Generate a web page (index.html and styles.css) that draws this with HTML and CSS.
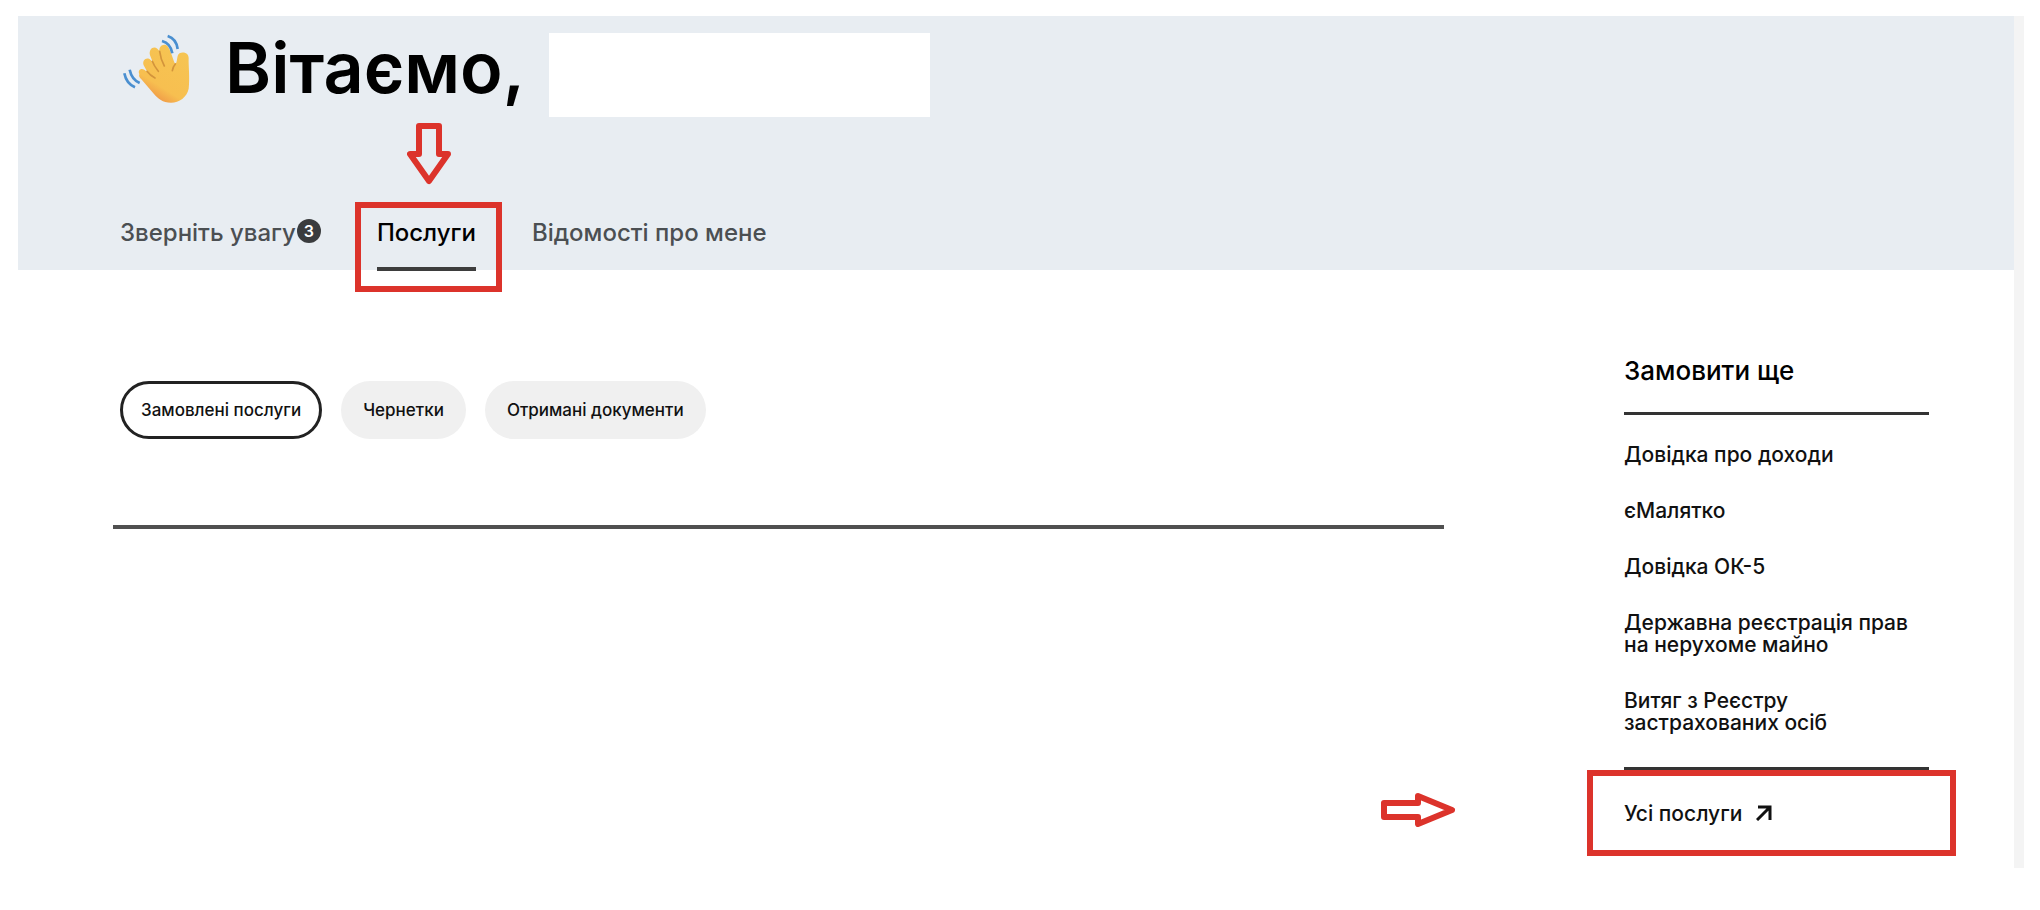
FILE: index.html
```html
<!DOCTYPE html>
<html lang="uk">
<head>
  <meta charset="UTF-8">
  <title>Послуги</title>
  <meta name="viewport" content="width=device-width, initial-scale=1.0">
  <link rel="stylesheet" href="styles.css">
</head>
<body>
  <div class="page">
    <header class="header">
      <div class="greeting">
        <svg class="wave" viewBox="0 0 204 210" aria-hidden="true">
          <defs>
            <linearGradient id="skin" x1="0.8" y1="0.1" x2="0.3" y2="1">
              <stop offset="0" stop-color="#f6c452"/>
              <stop offset="0.7" stop-color="#f7bf50"/>
              <stop offset="1" stop-color="#ee8f45"/>
            </linearGradient>
          </defs>
          <path fill="url(#skin)" d="M52 120 C46 108 58 100 68 108 L76 114 L65 94 C59 79 74 67 86 78 L92 84 L84 64 C79 46 94 34 106 44 L113 52 C108 36 128 25 138 38 C148 53 152 76 160 90 C165 86 164 78 167 66 C170 51 200 52 200 72 C199 96 204 130 200 164 C195 189 172 206 147 206 C122 206 108 194 96 180 L58 136 C52 130 50 126 52 120Z"/>
          <path fill="none" stroke="#d3943b" stroke-width="5" stroke-linecap="round" d="M75 112 Q84 124 99 132 M91 82 Q96 96 109 112 M113 52 Q116 76 127 96 M160 90 Q153 98 151 110"/>
          <g fill="none" stroke="#4a8fd0" stroke-width="8">
            <path d="M120 21 Q146 28 151 58"/>
            <path d="M137 6 Q163 14 167 45"/>
            <path d="M23 107 Q29 136 53 147"/>
            <path d="M7 118 Q13 149 39 160"/>
          </g>
        </svg>
        <h1 class="title">Вітаємо,</h1>
        <div class="user-name"></div>
      </div>

      <nav class="tabs">
        <a class="tab" href="#attention">Зверніть увагу<span class="badge">3</span></a>
        <a class="tab active" href="#services">Послуги
          <span class="frame tab-frame"></span>
          <svg class="pointer-down" viewBox="0 0 44 64" aria-hidden="true"><path d="M12 4H32V32H41L22 59L3 32H12Z"/></svg>
        </a>
        <a class="tab" href="#about">Відомості про мене</a>
      </nav>
    </header>

    <div class="content">
      <main class="services">
        <div class="filters">
          <button class="pill selected" type="button">Замовлені послуги</button>
          <button class="pill" type="button">Чернетки</button>
          <button class="pill" type="button">Отримані документи</button>
        </div>
        <hr class="divider">
      </main>

      <aside class="sidebar">
        <h2>Замовити ще</h2>
        <ul class="links">
          <li><a href="#income">Довідка про доходи</a></li>
          <li><a href="#malyatko">єМалятко</a></li>
          <li><a href="#ok5">Довідка ОК-5</a></li>
          <li><a href="#property">Державна реєстрація прав на нерухоме майно</a></li>
          <li><a href="#insured">Витяг з Реєстру застрахованих осіб</a></li>
        </ul>
        <div class="all-services">
          <a href="#all">Усі послуги
            <svg class="arrow-icon" viewBox="0 0 16 16" aria-hidden="true"><path d="M2 2H14V15M14 2L1 15"/></svg>
          </a>
          <span class="frame all-frame"></span>
          <svg class="pointer-right" viewBox="0 0 76 36" aria-hidden="true"><path d="M4 11H38V4L72 18L38 32V25H4Z"/></svg>
        </div>
      </aside>
    </div>
  </div>
</body>
</html>
```
FILE: styles.css
```css
* {
  box-sizing: border-box;
}
body {
  margin: 0;
  background: #fff;
  color: #111;
  font-family: Inter, 'Liberation Sans', sans-serif;
  font-weight: 500;
}
a {
  color: inherit;
  text-decoration: none;
}
.page {
  margin: 16px 16px 42px 18px;
  border-right: 10px solid #f4f4f4;
  min-height: calc(100vh - 58px);
}

/* header */
.header {
  background: #e8edf2;
  padding: 17px 102px 0 102px;
}
.greeting {
  display: flex;
  align-items: center;
  height: 84px;
}
.wave {
  width: 68px;
  height: 70px;
  margin: 0 35px 12px 2px;
}
.title {
  margin: 0 24px 14px 0;
  font-size: 70px;
  line-height: 70px;
  font-weight: 600;
  color: #000;
}
.user-name {
  width: 381px;
  height: 84px;
  background: #fff;
}
.tabs {
  display: flex;
  gap: 56px;
  padding-top: 100px;
}
.tab {
  position: relative;
  font-size: 24px;
  line-height: 32px;
  padding-bottom: 21px;
  color: #4b4f52;
}
.tab.active {
  color: #000;
}
.tab.active::after {
  content: "";
  position: absolute;
  left: 0;
  right: 0;
  bottom: -1px;
  height: 4px;
  background: #3d3d3d;
}
.badge {
  display: inline-block;
  width: 24px;
  height: 24px;
  margin-left: 1px;
  border-radius: 50%;
  background: #3a3c3e;
  color: #fff;
  font-size: 16px;
  line-height: 24px;
  font-weight: 600;
  text-align: center;
  vertical-align: 4px;
}

/* red marks */
.frame {
  position: absolute;
  border: 6px solid #dc332b;
}
.tab-frame {
  inset: -15px -26px -22px -22px;
}
.pointer-down,
.pointer-right {
  position: absolute;
  fill: none;
  stroke: #dc332b;
  stroke-width: 6;
  stroke-linejoin: round;
}
.pointer-down {
  width: 44px;
  height: 64px;
  left: 30px;
  top: -95px;
}
.pointer-right {
  width: 76px;
  height: 36px;
  left: -244px;
  top: 22px;
}

/* content */
.content {
  display: flex;
  gap: 180px;
  padding: 82px 85px 0 95px;
}
.services {
  flex: 1;
}
.filters {
  display: flex;
  gap: 19px;
  padding: 29px 7px 0;
}
.pill {
  height: 58px;
  padding: 0 22px;
  border: 0;
  border-radius: 29px;
  background: #f0f0f0;
  color: #111;
  font-family: inherit;
  font-size: 17px;
  font-weight: 500;
}
.pill.selected {
  padding: 0 18px;
  border: 3px solid #222;
  background: #fff;
}
.divider {
  height: 4px;
  margin: 86px 0 0;
  border: 0;
  background: #505050;
}

/* sidebar */
.sidebar {
  width: 305px;
}
.sidebar h2 {
  margin: 0;
  padding: 3px 0 25px;
  border-bottom: 3px solid #333;
  font-size: 26px;
  line-height: 32px;
  font-weight: 500;
  color: #000;
}
.links {
  list-style: none;
  margin: 0;
  padding: 29px 0 33px;
  border-bottom: 3px solid #333;
  display: flex;
  flex-direction: column;
  gap: 34px;
  font-size: 21px;
  line-height: 22px;
}
.all-services {
  position: relative;
  padding: 30px 0;
  font-size: 21px;
  line-height: 28px;
}
.arrow-icon {
  width: 16px;
  height: 16px;
  margin-left: 8px;
  fill: none;
  stroke: #111;
  stroke-width: 3;
}
.all-frame {
  inset: 0 -27px 2px -37px;
}
```
